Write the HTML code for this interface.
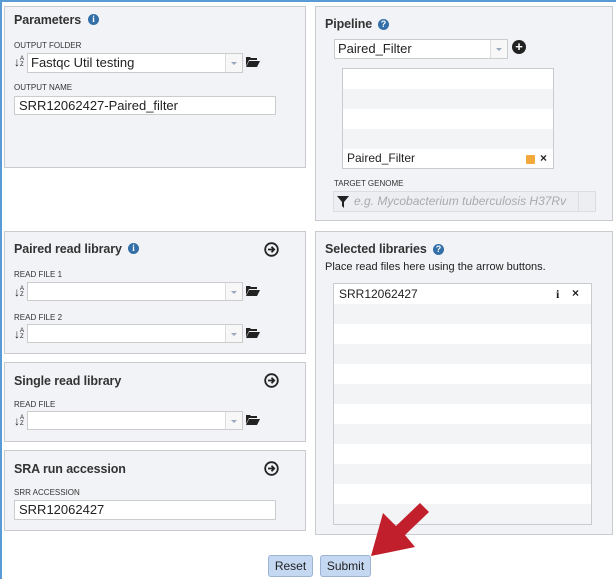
<!DOCTYPE html>
<html><head><meta charset="utf-8"><style>
*{box-sizing:border-box;margin:0;padding:0}
body{width:616px;height:579px;background:#fff;font-family:"Liberation Sans",Arial,sans-serif;position:relative;overflow:hidden;color:#222}
.a{position:absolute}
.panel{position:absolute;background:#f2f3f6;border:1px solid #c9cbcf}
.t{position:absolute;font-weight:bold;font-size:12.5px;letter-spacing:-0.1px;color:#333}
.lab{position:absolute;font-size:8px;color:#333;letter-spacing:0}
.sel{position:absolute;background:#fff;border:1px solid #ccc;height:19px;font-size:13px;padding:1px 3px;line-height:16px}
.sel .dd{position:absolute;right:0;top:0;bottom:0;width:17px;border-left:1px solid #ddd;background:#f7f7f7}
.sel .dd:after{content:"";position:absolute;left:5px;top:8px;border-left:3px solid transparent;border-right:3px solid transparent;border-top:3px solid #9aa8c0}
.inp{position:absolute;background:#fff;border:1px solid #ccc;height:19px;font-size:13px;padding:1px 4px;line-height:16px}
.srt{position:absolute;font-size:7px;line-height:6px;width:12px;height:14px}
.srt b{position:absolute;left:0;top:0;font-size:12px;line-height:14px;font-weight:bold}
.srt i{position:absolute;left:6px;top:1px;font-style:normal;font-size:6px;line-height:6px}
.info{position:absolute;width:11px;height:11px;border-radius:50%;background:#336fa8;color:#fff;font-size:9px;font-weight:bold;text-align:center;line-height:11px;font-family:"Liberation Serif",serif}
.q{font-family:"Liberation Sans",sans-serif;font-size:9px}
.btn{position:absolute;background:#c4d8f2;border:1px solid #9cb3d3;border-radius:3px;font-size:12px;text-align:center;line-height:20px;color:#222}
</style></head><body>
<div class="a" style="left:0;top:0;width:616px;height:2px;background:#5b9bd5"></div>
<div class="a" style="left:0;top:0;width:2px;height:579px;background:#5b9bd5"></div>

<div class="panel" style="left:4px;top:6px;width:302px;height:162px"></div>
<div class="t" style="left:14px;top:13px">Parameters</div>
<div class="info" style="left:88px;top:14px">i</div>
<div class="lab" style="left:14px;top:41px">OUTPUT FOLDER</div>
<div class="srt" style="left:14px;top:55px"><b>↓</b><i>A<br>Z</i></div>
<div class="sel" style="left:27px;top:53px;width:216px;height:20px">Fastqc Util testing<div class="dd"></div></div>
<svg class="a" style="left:246px;top:56px" width="14" height="11" viewBox="0 0 14 11"><path d="M0 1h4l1 1h6v2H3L0 10z M3 5h11l-3 6H0z" fill="#222"/></svg>
<div class="lab" style="left:14px;top:83px">OUTPUT NAME</div>
<div class="inp" style="left:14px;top:96px;width:262px">SRR12062427-Paired_filter</div>

<div class="panel" style="left:315px;top:6px;width:298px;height:215px"></div>
<div class="t" style="left:325px;top:17px">Pipeline</div>
<div class="info q" style="left:378px;top:19px">?</div>
<div class="sel" style="left:334px;top:39px;width:174px;height:20px">Paired_Filter<div class="dd"></div></div>
<div class="a" style="left:512px;top:40px;width:14px;height:14px;border-radius:50%;background:#222;color:#fff;font-weight:bold;font-size:13px;line-height:14px;text-align:center">+</div>
<div class="a" style="left:342px;top:68px;width:212px;height:101px;border:1px solid #c9cbcf;background:#fff">
 <div style="height:20px;background:#fff"></div><div style="height:20px;background:#f3f4f5"></div><div style="height:20px;background:#fff"></div><div style="height:20px;background:#f3f4f5"></div>
 <div style="height:19px;background:#fff;font-size:12px;padding-left:4px;line-height:18px;position:relative">Paired_Filter<span style="position:absolute;left:183px;top:6px;width:9px;height:9px;background:#f3a93b;border-radius:1px"></span><span style="position:absolute;left:197px;top:0;font-size:12px;font-weight:bold">×</span></div>
</div>
<div class="lab" style="left:334px;top:179px">TARGET GENOME</div>
<div class="a" style="left:333px;top:191px;width:263px;height:21px;border:1px solid #ddd;background:#eceef1;font-size:12px;font-style:italic;color:#aaa;padding-left:20px;line-height:18px;white-space:nowrap;overflow:hidden">e.g. Mycobacterium tuberculosis H37Rv
 <svg style="position:absolute;left:3px;top:4px" width="12" height="12" viewBox="0 0 12 12"><path d="M0 0h12L7 6v6L5 10V6z" fill="#222"/></svg>
 <div style="position:absolute;right:0;top:0;bottom:0;width:17px;border-left:1px solid #ddd;background:#eceef1"></div></div>

<div class="panel" style="left:4px;top:231px;width:302px;height:123px"></div>
<div class="t" style="left:14px;top:242px">Paired read library</div>
<div class="info" style="left:128px;top:243px">i</div>
<svg class="a" style="left:264px;top:242px" width="15" height="15" viewBox="0 0 15 15"><circle cx="7.5" cy="7.5" r="6.3" fill="none" stroke="#222" stroke-width="1.8"/><path d="M4 7.5h6M7.5 4.8l2.7 2.7-2.7 2.7" fill="none" stroke="#222" stroke-width="1.8"/></svg>
<div class="lab" style="left:14px;top:270px">READ FILE 1</div>
<div class="srt" style="left:14px;top:285px"><b>↓</b><i>A<br>Z</i></div>
<div class="sel" style="left:27px;top:282px;width:216px"><div class="dd"></div></div>
<svg class="a" style="left:246px;top:285px" width="14" height="11" viewBox="0 0 14 11"><path d="M0 1h4l1 1h6v2H3L0 10z M3 5h11l-3 6H0z" fill="#222"/></svg>
<div class="lab" style="left:14px;top:313px">READ FILE 2</div>
<div class="srt" style="left:14px;top:327px"><b>↓</b><i>A<br>Z</i></div>
<div class="sel" style="left:27px;top:324px;width:216px"><div class="dd"></div></div>
<svg class="a" style="left:246px;top:327px" width="14" height="11" viewBox="0 0 14 11"><path d="M0 1h4l1 1h6v2H3L0 10z M3 5h11l-3 6H0z" fill="#222"/></svg>

<div class="panel" style="left:4px;top:362px;width:302px;height:80px"></div>
<div class="t" style="left:14px;top:374px">Single read library</div>
<svg class="a" style="left:264px;top:373px" width="15" height="15" viewBox="0 0 15 15"><circle cx="7.5" cy="7.5" r="6.3" fill="none" stroke="#222" stroke-width="1.8"/><path d="M4 7.5h6M7.5 4.8l2.7 2.7-2.7 2.7" fill="none" stroke="#222" stroke-width="1.8"/></svg>
<div class="lab" style="left:14px;top:400px">READ FILE</div>
<div class="srt" style="left:14px;top:414px"><b>↓</b><i>A<br>Z</i></div>
<div class="sel" style="left:27px;top:411px;width:216px"><div class="dd"></div></div>
<svg class="a" style="left:246px;top:414px" width="14" height="11" viewBox="0 0 14 11"><path d="M0 1h4l1 1h6v2H3L0 10z M3 5h11l-3 6H0z" fill="#222"/></svg>

<div class="panel" style="left:4px;top:450px;width:302px;height:81px"></div>
<div class="t" style="left:14px;top:462px">SRA run accession</div>
<svg class="a" style="left:264px;top:461px" width="15" height="15" viewBox="0 0 15 15"><circle cx="7.5" cy="7.5" r="6.3" fill="none" stroke="#222" stroke-width="1.8"/><path d="M4 7.5h6M7.5 4.8l2.7 2.7-2.7 2.7" fill="none" stroke="#222" stroke-width="1.8"/></svg>
<div class="lab" style="left:14px;top:488px">SRR ACCESSION</div>
<div class="inp" style="left:14px;top:500px;width:262px;height:20px">SRR12062427</div>

<div class="panel" style="left:315px;top:231px;width:298px;height:304px"></div>
<div class="t" style="left:325px;top:242px">Selected libraries</div>
<div class="info q" style="left:433px;top:244px">?</div>
<div class="a" style="left:325px;top:261px;font-size:11px;color:#222">Place read files here using the arrow buttons.</div>
<div class="a" style="left:333px;top:283px;width:259px;height:242px;border:1px solid #c9cbcf;background:repeating-linear-gradient(#fff 0 20px,#f3f4f5 20px 40px)">
 <div style="font-size:12px;padding:3px 5px;position:relative">SRR12062427<span style="position:absolute;left:222px;top:3px;font-weight:bold;font-family:'Liberation Serif',serif">i</span><span style="position:absolute;left:238px;top:2px;font-weight:bold">×</span></div>
</div>

<div class="btn" style="left:268px;top:555px;width:45px;height:22px">Reset</div>
<div class="btn" style="left:320px;top:555px;width:51px;height:22px">Submit</div>

<svg class="a" style="left:0;top:0" width="616" height="579"><path d="M371 556 L383 513 L396 526 L420 503 L429 512 L405 535 L415 547 Z" fill="#c01f2b"/></svg>
</body></html>
